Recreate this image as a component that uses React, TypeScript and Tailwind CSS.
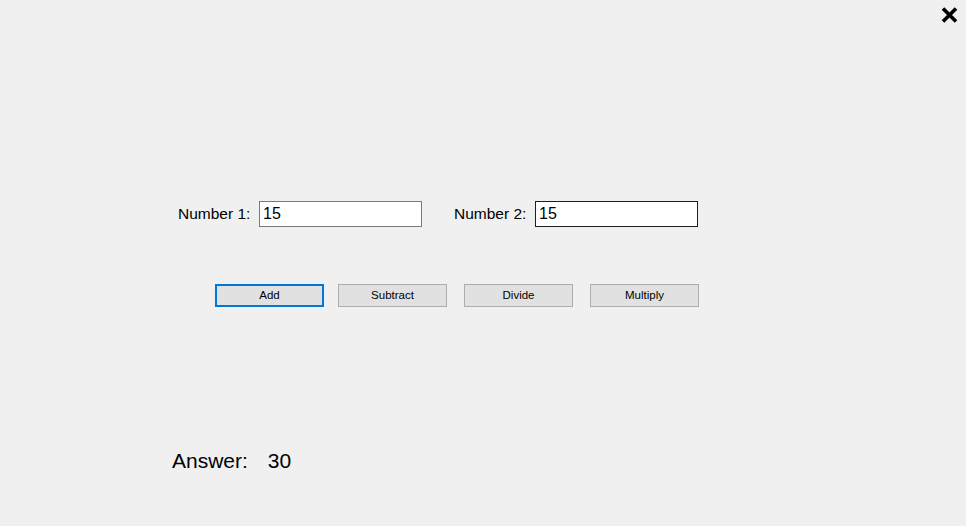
export default function App() {
  return (
    <div
      className="relative h-[526px] w-full overflow-hidden bg-[#f0f0f0] text-black"
      style={{ fontFamily: '"Liberation Sans", Arial, sans-serif' }}
    >
      {/* close button */}
      <button className="absolute right-[8px] top-[7px] flex h-[16px] w-[17px] items-center justify-center">
        <svg width="17" height="16" viewBox="0 0 17 16">
          <path d="M2 1.5 L15 14.5 M15 1.5 L2 14.5" stroke="#000" strokeWidth="3.6" strokeLinecap="butt" />
        </svg>
      </button>

      <div className="flex flex-col pt-[201px]">
        {/* inputs row */}
        <div className="flex h-[26px] items-center pl-[178px]">
          <label className="w-[74px] whitespace-nowrap text-[15.5px] leading-none">Number 1:</label>
          <input
            defaultValue="15"
            className="ml-[7px] h-[26px] w-[163px] border border-[#7a7a7a] bg-white px-[3px] text-[16px] outline-none"
          />
          <label className="ml-[32px] w-[74px] whitespace-nowrap text-[15.5px] leading-none">Number 2:</label>
          <input
            defaultValue="15"
            className="ml-[7px] h-[26px] w-[163px] border border-[#1e1e1e] bg-white px-[3px] text-[16px] outline-none"
          />
        </div>

        {/* buttons row */}
        <div className="mt-[57px] flex pl-[215px]">
          <button className="h-[23px] w-[109px] border-2 border-[#0078d7] bg-[#e1e1e1] text-[11.5px]">Add</button>
          <button className="ml-[14px] h-[23px] w-[109px] border border-[#adadad] bg-[#e1e1e1] text-[11.5px]">Subtract</button>
          <button className="ml-[17px] h-[23px] w-[109px] border border-[#adadad] bg-[#e1e1e1] text-[11.5px]">Divide</button>
          <button className="ml-[17px] h-[23px] w-[109px] border border-[#adadad] bg-[#e1e1e1] text-[11.5px]">Multiply</button>
        </div>

        {/* answer */}
        <div className="mt-[142px] flex pl-[172px] text-[21px] leading-[24px]">
          <span>Answer:</span>
          <span className="ml-[20px]">30</span>
        </div>
      </div>
    </div>
  );
}
